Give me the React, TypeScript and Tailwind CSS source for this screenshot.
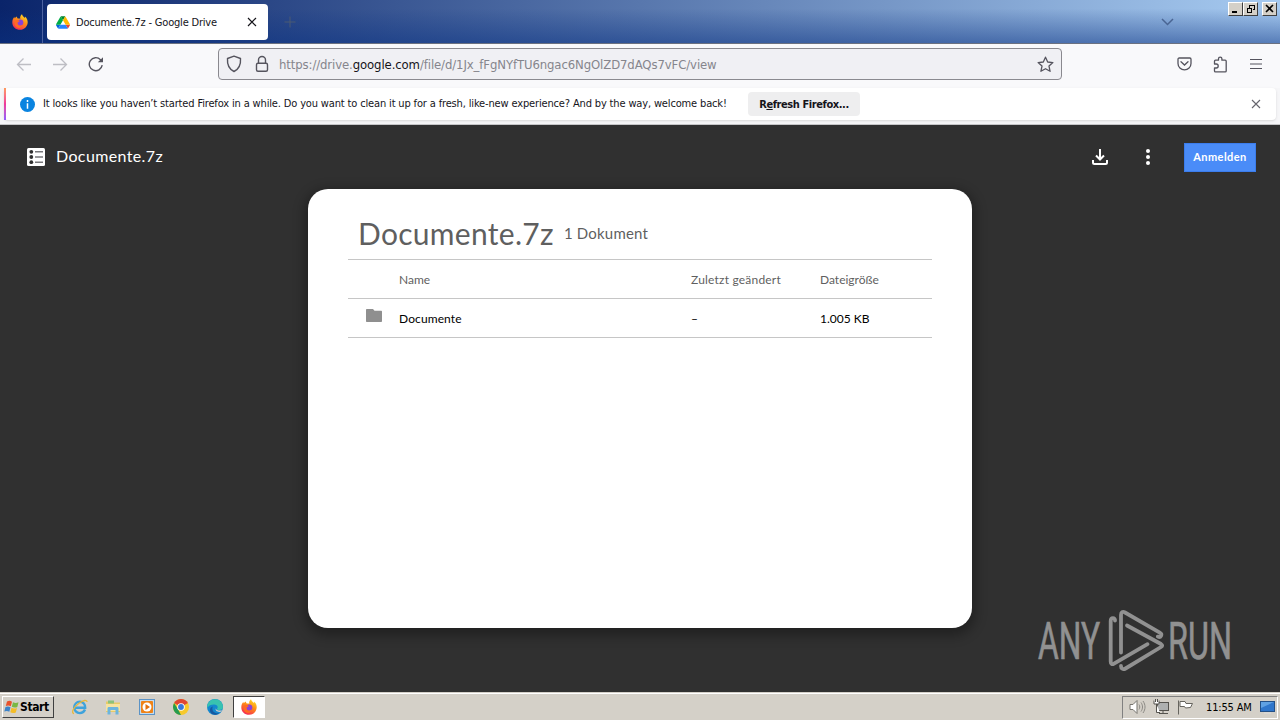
import React from "react";

const files = [{ id: 1, name: "Documente", modified: "–", size: "1.005 KB" }];

const FirefoxIcon = ({ size }: { size: number }) => (
  <svg width={size} height={size} viewBox="0 0 16 16">
    <defs>
      <linearGradient id="fox" x1="0.8" y1="0" x2="0.25" y2="1">
        <stop offset="0" stopColor="#ffe226" />
        <stop offset="0.45" stopColor="#ff8a16" />
        <stop offset="1" stopColor="#f5245b" />
      </linearGradient>
    </defs>
    <path
      d="M10 0.3c0.3 1.6 1.6 2.3 2.7 3.6 0.3-0.4 0.3-1 0.2-1.5C15 4 15.8 6.200 15.700 8.500 15.500 12.600 12.200 15.800 8 15.800S0.300 12.600 0.300 8.400c0-2.300 0.800-4.200 2.100-5.700 0 0.700 0.100 1.200 0.400 1.600C3.300 3.600 4 2.900 4.900 2.500c0 0.800 0.200 1.500 0.800 2 1-0.200 1.900 0 2.600 0.300C7.800 3 8.600 1.200 10 0.300z"
      fill="url(#fox)"
    />
    <circle cx="8.300" cy="8.600" r="3" fill="#8a42d8" />
    <path d="M3 6.500c1.500-1 3.400-0.700 4.800 0.500-0.600 0.900-2 0.800-2.400 2 0 2.700 3.500 3.800 5.700 1.800-1 3-4.200 4-6.500 2.500C2.500 12 2 9 3 6.500z" fill="#ff6a24" />
  </svg>
);

const DriveIcon = () => (
  <svg width="14" height="13" viewBox="0 0 87.3 78">
    <path d="m6.600 66.850 3.850 6.650c.8 1.400 1.950 2.500 3.300 3.300l13.750-23.800h-27.500c0 1.550.4 3.100 1.200 4.500z" fill="#0066da" />
    <path d="m43.650 25-13.750-23.800c-1.350.8-2.500 1.900-3.300 3.300l-25.400 44a9.060 9.060 0 0 0 -1.200 4.500h27.500z" fill="#00ac47" />
    <path d="m73.550 76.800c1.350-.8 2.500-1.900 3.300-3.300l1.600-2.750 7.650-13.250c.8-1.400 1.200-2.950 1.200-4.500h-27.502l5.852 11.500z" fill="#ea4335" />
    <path d="m43.650 25 13.750-23.800c-1.350-.8-2.900-1.200-4.500-1.200h-18.500c-1.600 0-3.150.45-4.500 1.200z" fill="#00832d" />
    <path d="m59.800 53h-32.300l-13.750 23.800c1.350.8 2.900 1.200 4.500 1.200h50.800c1.600 0 3.150-.45 4.500-1.200z" fill="#2684fc" />
    <path d="m73.400 26.500-12.700-22c-.8-1.400-1.950-2.500-3.300-3.300l-13.750 23.800 16.150 28h27.450c0-1.550-.4-3.100-1.200-4.500z" fill="#ffba00" />
  </svg>
);

const WindowButton = ({ children }: { children: React.ReactNode }) => (
  <div className="flex h-[14px] w-[15px] items-center justify-center border border-t-white border-l-white border-r-[#404040] border-b-[#404040] bg-[#d4d0c8]">
    <svg width="11" height="10" viewBox="0 0 11 10" fill="none" stroke="#000" shapeRendering="crispEdges">
      {children}
    </svg>
  </div>
);

const TitleBar = () => (
  <div className="flex h-[44px] border-b border-[#6b7180] bg-[linear-gradient(to_bottom,transparent_20%,rgba(10,50,130,0.5)),linear-gradient(to_right,#0a246a,#a6caf0)]">
    <div className="flex w-[43px] items-center justify-center border-r border-[#4c62a0] pr-0.5">
      <FirefoxIcon size={16} />
    </div>
    <div className="mt-1 ml-1 flex h-9 w-[221px] items-center rounded bg-white pl-[9px]">
      <DriveIcon />
      <span className="mt-0.5 ml-1.5 w-[165px] text-[11px] tracking-[-0.2px] whitespace-nowrap text-[#15141a]">
        Documente.7z - Google Drive
      </span>
      <svg className="ml-1.5" width="10" height="10" viewBox="0 0 10 10" stroke="#15141a" strokeWidth="1.2">
        <path d="M1 1l8 8M9 1l-8 8" />
      </svg>
    </div>
    <svg className="mt-4 ml-4" width="12" height="12" viewBox="0 0 12 12" stroke="#4b5a73" strokeWidth="1">
      <path d="M6 0.500v11M0.500 6h11" />
    </svg>
    <svg className="mt-[18px] ml-auto" width="13" height="8" viewBox="0 0 13 8" fill="none" stroke="#4a6593" strokeWidth="1.500">
      <path d="M1 1l5.500 5.500L12 1" />
    </svg>
    <div className="mt-0.5 mr-[3px] ml-[54px] flex">
      <WindowButton>
        <path d="M2 8h5" strokeWidth="2" />
      </WindowButton>
      <WindowButton>
        <path d="M4.500 4V1.500h5v4H8M4 1.500h6M2.500 4.500h4v4h-4zM2 4.500h5" />
      </WindowButton>
      <div className="ml-1">
        <WindowButton>
          <path d="M2 1l7 7M9 1L2 8" strokeWidth="1.600" shapeRendering="auto" />
        </WindowButton>
      </div>
    </div>
  </div>
);

const Toolbar = () => (
  <div className="flex h-11 items-center bg-[#f9f9fb] pb-1">
    <svg className="ml-4" width="16" height="16" viewBox="0 0 16 16" fill="none" stroke="#bebec4" strokeWidth="1.300">
      <path d="M15 8.500H1.500M7.500 2.500l-6 6 6 6" />
    </svg>
    <svg className="ml-5" width="16" height="16" viewBox="0 0 16 16" fill="none" stroke="#bebec4" strokeWidth="1.300">
      <path d="M1 8.500h13.500M8.500 2.500l6 6-6 6" />
    </svg>
    <svg className="ml-5" width="16" height="16" viewBox="0 0 16 16" fill="none" stroke="#55545e" strokeWidth="1.400">
      <path d="M14.200 9.200a6.500 6.500 0 1 1-1.700-5.500l1.300 1.300" />
      <path d="M15 1.200v5H9.800z" fill="#55545e" stroke="none" />
    </svg>
    <div className="ml-[114px] flex h-8 w-[844px] items-center rounded border border-[#8a898f] bg-[#f0f0f4] px-[7px]">
      <svg width="16" height="18" viewBox="0 0 16 18" fill="none" stroke="#55545e" strokeWidth="1.400">
        <path d="M8 1.200L14.500 3.500c0.400 5.300-1.400 10.500-6.500 13-5.100-2.500-6.900-7.700-6.500-13z" strokeLinejoin="round" />
      </svg>
      <svg className="ml-3" width="16" height="18" viewBox="0 0 16 18" fill="none" stroke="#55545e" strokeWidth="1.400">
        <rect x="2.500" y="8.200" width="11" height="8" rx="1.500" />
        <path d="M4.500 8V5a3.500 3.500 0 0 1 7 0v3" />
      </svg>
      <span className="mt-0.5 ml-[9px] text-[13px] tracking-[-0.11px] whitespace-nowrap text-[#85858c]">
        https://drive.<span className="text-[#15141a]">google.com</span>/file/d/1Jx_fFgNYfTU6ngac6NgOlZD7dAQs7vFC/view
      </span>
      <svg className="ml-auto" width="17" height="17" viewBox="0 0 17 17" fill="none" stroke="#55545e" strokeWidth="1.300" strokeLinejoin="round">
        <path d="M8.500 1.200l2.200 4.800 5.200 0.600-3.900 3.500 1.100 5.200-4.600-2.600-4.600 2.600L5 10.100 1.100 6.600 6.300 6z" />
      </svg>
    </div>
    <svg className="ml-[115px]" width="15" height="14" viewBox="0 0 15 14" fill="none" stroke="#55545e" strokeWidth="1.300">
      <path d="M2.200 1h10.600c0.700 0 1.200 0.500 1.200 1.200V6.500a6.500 6.300 0 0 1-13 0V2.200C1 1.500 1.500 1 2.200 1z" />
      <path d="M4 4.800l3.500 3.200L11 4.800" strokeLinecap="round" />
    </svg>
    <svg className="ml-5" width="17" height="17" viewBox="0 0 17 17" fill="none" stroke="#55545e" strokeWidth="1.300" strokeLinejoin="round">
      <path d="M2.500 8V5.200c0-0.600 0.400-1 1-1H6.500V2.800a1.700 1.700 0 0 1 3.400 0v1.400h3.300c0.600 0 1 0.400 1 1v9.700c0 0.600-0.400 1-1 1H3.500c-0.600 0-1-0.400-1-1V12h1.700a1.900 1.900 0 0 0 0-4z" />
    </svg>
    <svg className="ml-[21px]" width="12" height="12" viewBox="0 0 12 12" stroke="#55545e" strokeWidth="1.200">
      <path d="M0 1.500h12M0 6h12M0 10.500h12" />
    </svg>
  </div>
);

const Notification = () => (
  <div className="h-[37px] border-b border-[#c6c6c8] bg-[#f6f6f8] px-1">
    <div className="flex h-8 items-center rounded bg-white shadow-sm">
      <div className="h-8 w-0.5 bg-linear-to-b from-[#ff9a5c] via-[#f0389a] to-[#9059ff]" />
      <svg className="ml-3.5" width="15" height="15" viewBox="0 0 15 15">
        <circle cx="7.500" cy="7.500" r="7.500" fill="#0a84e0" />
        <path d="M7.500 3v2M7.500 6.200v5.600" stroke="#fff" strokeWidth="1.500" />
      </svg>
      <span className="ml-2 w-[705px] text-[11px] tracking-[-0.15px] whitespace-nowrap text-[#15141a]">
        It looks like you haven’t started Firefox in a while. Do you want to clean it up for a fresh, like-new experience? And by the way, welcome back!
      </span>
      <button className="flex h-6 w-28 items-center justify-center rounded bg-[#eeeeef] pt-0.5 text-[11px] font-bold tracking-[-0.42px] whitespace-nowrap text-[#15141a]">
        <span>
          R<span className="underline">e</span>fresh Firefox...
        </span>
      </button>
      <svg className="mr-[15px] ml-auto" width="10" height="10" viewBox="0 0 10 10" stroke="#66656d" strokeWidth="1.100">
        <path d="M1 1l8 8M9 1L1 9" />
      </svg>
    </div>
  </div>
);

const Watermark = () => (
  <svg className="absolute top-[484px] left-[1035px]" width="244" height="72" viewBox="0 0 244 72" fill="none">
    <g fontFamily="Roboto" fontSize="52" fill="#919191" stroke="#919191" strokeWidth="0.700">
      <text x="3" y="50" textLength="62" lengthAdjust="spacingAndGlyphs">
        ANY
      </text>
      <text x="133" y="50" textLength="64" lengthAdjust="spacingAndGlyphs">
        RUN
      </text>
    </g>
    <g stroke="#919191" strokeWidth="3.800" strokeLinecap="round" strokeLinejoin="round">
      <path d="M80 11.500c0.300-3-4.300-3.500-4.300 0.500v40.500c0 2.500 1.300 3.300 3.300 2.100l33.500-19.400" />
      <path d="M86 43.500V6c0-2.800 1.700-3.800 4-2.500l34.800 20.200c3 1.800 1 5.200-2 3.900" />
      <path d="M92 16.500l34 18.500c1.600 1 1.600 2 0 3L90.500 59.500c-2.500 1.500-4.500 0-4.500-2.500" />
    </g>
  </svg>
);

const Viewer = () => (
  <div className="relative h-[567px] bg-[#303030] font-[Lato,sans-serif]">
    <div className="flex h-16 items-center pr-6 pl-[27px]">
      <svg width="18" height="18" viewBox="0 0 18 18">
        <rect width="18" height="18" rx="1.500" fill="#fff" />
        <g fill="#303030">
          <circle cx="4.300" cy="3.800" r="1.900" />
          <circle cx="4.300" cy="9" r="1.900" />
          <circle cx="4.300" cy="14.200" r="1.900" />
        </g>
        <path d="M8 3.800h8M8 9h8M8 14.200h8" stroke="#77777b" strokeWidth="1.400" />
      </svg>
      <span className="mb-0.5 ml-[11px] text-base tracking-[0.37px] text-white">Documente.7z</span>
      <svg className="ml-auto" width="16" height="16" viewBox="0 0 16 16" fill="none" stroke="#fff" strokeWidth="2">
        <path d="M8 0v10M4 6.500l4 4 4-4M1 11v2.500c0 1 0.500 1.500 1.500 1.500h11c1 0 1.500-0.500 1.500-1.500V11" />
      </svg>
      <svg className="ml-[38px]" width="4" height="16" viewBox="0 0 4 16" fill="#fff">
        <circle cx="2" cy="2" r="2" />
        <circle cx="2" cy="8" r="2" />
        <circle cx="2" cy="14" r="2" />
      </svg>
      <button className="ml-[34px] h-[29px] w-[72px] border border-[#3b7ded] bg-[#4a8cf8] text-[11px] font-bold tracking-[0.45px] text-white">
        Anmelden
      </button>
    </div>

    <div className="mx-auto h-[439px] w-[664px] rounded-[20px] bg-white px-10 pt-[19px] text-[#5f5f5f] shadow-[0_4px_12px_4px_rgba(0,0,0,0.3)]">
      <div className="flex h-[52px] items-center border-b border-[#c6c6c6] pl-2.5">
        <h1 className="text-[30px] tracking-[0.3px]">Documente.7z</h1>
        <span className="ml-2.5 text-[15px] tracking-[0.2px]">1 Dokument</span>
      </div>
      <div className="grid h-[39px] grid-cols-[51px_292px_129px_1fr] items-center border-b border-[#c6c6c6] pt-0.5 text-xs">
        <span />
        <span>Name</span>
        <span className="tracking-[0.2px]">Zuletzt geändert</span>
        <span>Dateigröße</span>
      </div>
      {files.map((file) => (
        <div
          key={file.id}
          className="grid h-[39px] grid-cols-[51px_292px_129px_1fr] items-center border-b border-[#c6c6c6] pt-0.5 text-xs text-black"
        >
          <svg className="mb-2 ml-[18px]" width="16" height="13" viewBox="0 0 16 13" fill="#8f8f8f">
            <path d="M1 0h6l1.500 1.700H15c0.600 0 1 0.400 1 1V12c0 0.600-0.400 1-1 1H1c-0.600 0-1-0.400-1-1V1c0-0.600 0.400-1 1-1z" />
          </svg>
          <span className="tracking-[0.1px]">{file.name}</span>
          <span>{file.modified}</span>
          <span>{file.size}</span>
        </div>
      ))}
    </div>
    <Watermark />
  </div>
);

const Taskbar = () => (
  <div className="border-t border-[#d4d0c8]">
    <div className="flex h-[27px] items-center border-t border-white bg-[#d4d0c8] pr-0.5 pl-0.5">
      <button className="flex h-[22px] w-[52px] items-center border border-t-white border-l-white border-r-[#404040] border-b-[#404040] pl-px text-xs font-bold tracking-[-0.4px] text-black">
        <svg width="16" height="16" viewBox="0 0 16 16">
          <path d="M3 2.500c2-1 3.500-0.800 5 0.200L6.800 7.300C5.300 6.300 3.500 6.200 1.800 7z" fill="#e8522c" />
          <path d="M9 3.200c1.800 1 3.500 1 5.500 0.100L13.300 8c-1.800 0.800-3.800 0.700-5.500-0.300z" fill="#79b843" />
          <path d="M1.500 8c1.700-0.800 3.500-0.700 5 0.300L5.300 12.800C3.800 11.800 2 11.800 0.300 12.500z" fill="#3c83c9" />
          <path d="M7.500 8.800c1.800 1 3.500 1 5.500 0.200l-1.200 4.500c-1.800 0.800-3.800 0.800-5.500-0.200z" fill="#f4bd27" />
        </svg>
        Start
      </button>
      {/* Quick launch */}
      <svg className="ml-[17px]" width="18" height="16" viewBox="0 0 18 16" fill="none">
        <path d="M14 10.500c-1 2.300-3 3.600-5.200 3.600-3.200 0-5.600-2.500-5.600-5.600s2.300-5.700 5.600-5.700c3.400 0 5.500 2.500 5.400 6H4" stroke="#3fa3dc" strokeWidth="2.400" />
        <path d="M3 14.500c-3-0.500-1-6 5-10.300 4.500-3.200 8-3.600 8-1.200" stroke="#e9b83a" strokeWidth="1.300" />
      </svg>
      <svg className="ml-4" width="16" height="16" viewBox="0 0 16 16">
        <path d="M1 2.500h6l1 1h7V13H1z" fill="#e8ca67" />
        <path d="M3 1.500h6v3H3z" fill="#8ac27b" />
        <path d="M1 5h14v7H1z" fill="#f6e3a0" />
        <path d="M2.500 15.500V9.500c0-1 0.500-1.500 1.500-1.500h8c1 0 1.500 0.500 1.500 1.500v6h-3V11h-5v4.500z" fill="#6db5dd" />
      </svg>
      <svg className="ml-[18px]" width="16" height="16" viewBox="0 0 16 16">
        <rect x="0.500" y="0.500" width="15" height="15" fill="#c4dcf0" stroke="#5b93c6" />
        <rect x="2" y="2" width="12" height="12" rx="1" fill="#ef8318" />
        <circle cx="8" cy="8" r="4.500" fill="#fff" />
        <path d="M6.500 5l4.500 3-4.500 3z" fill="#e2700d" />
      </svg>
      <svg className="ml-[18px]" width="16" height="16" viewBox="0 0 16 16">
        <circle cx="8" cy="8" r="8" fill="#f7c92c" />
        <path d="M8 8L1.100 4A8 8 0 0 1 14.900 4z" fill="#df4635" />
        <path d="M1.100 4l4 6.500L8 16A8 8 0 0 1 1.100 4z" fill="#259b50" />
        <circle cx="8" cy="8" r="3.800" fill="#fff" />
        <circle cx="8" cy="8" r="2.900" fill="#3778dc" />
      </svg>
      <svg className="ml-[18px]" width="16" height="16" viewBox="0 0 16 16">
        <circle cx="8" cy="8" r="8" fill="#1487ce" />
        <path d="M0.300 6A8 8 0 0 1 16 8c0 2-1.500 3-3.500 3-2.500 0-3-1-2-2 0.700-2-1-3.500-3.500-3.500C4 5.500 1.500 6.500 0.300 9z" fill="#38c2b0" />
        <path d="M5.800 7.500C4 12 8 15 12.500 14c-4 3.500-10 1.500-9.500-3.200 0.200-1.800 1.300-3 2.800-3.300z" fill="#1659a1" />
        <path d="M9 8.500c-1 2 1.500 3.500 6 2.800l-1 1.500C10.500 13.500 7.500 11.500 9 8.500z" fill="#d4d0c8" />
      </svg>
      <div className="ml-2.5 flex h-[22px] w-8 items-center justify-center border border-t-[#404040] border-l-[#404040] border-r-white border-b-white bg-white">
        <FirefoxIcon size={16} />
      </div>

      {/* Tray */}
      <div className="ml-auto flex h-[23px] w-[156px] items-center border border-t-[#808080] border-l-[#808080] border-r-white border-b-white pl-1.5">
        <svg width="17" height="16" viewBox="0 0 17 16" fill="none" stroke="#77756f">
          <path d="M1 5.500h3l4-4v13l-4-4H1z" fill="#fff" />
          <path d="M10 5.500c1 1.500 1 3.500 0 5M12 3.500c2 3 2 6 0 9M14 2c2.700 4 2.700 8 0 12" stroke="#8c8a85" />
        </svg>
        <svg className="ml-[7px]" width="17" height="16" viewBox="0 0 17 16" stroke="#55534e">
          <rect x="4.500" y="3.500" width="11" height="8" fill="#aeb0b0" />
          <path d="M6 14.500h9M10 12v2" />
          <path d="M1 1.500v3.500h5V1.500M2.500 0v3M4.500 0v3M3.500 5v8.500H7" fill="#fff" />
        </svg>
        <svg className="ml-[7px]" width="17" height="16" viewBox="0 0 17 16" fill="#fff" stroke="#66645e">
          <path d="M1.500 1.500v14M3 2.500h5l1 2h6.500l-2 4-5 0.500-1-1.500H3z" />
        </svg>
        <span className="mt-0.5 ml-3 w-[47px] text-[11px] tracking-[-0.15px] whitespace-nowrap text-black">11:55 AM</span>
        <svg className="ml-[7px]" width="15" height="14" viewBox="0 0 15 14">
          <rect x="0.500" y="1.500" width="14" height="10" fill="#2f76cb" stroke="#235087" />
          <path d="M1 2h13L1 8z" fill="#5fa1e3" />
          <path d="M4 13h7" stroke="#ddd" />
        </svg>
      </div>
    </div>
  </div>
);

const App: React.FC = () => {
  return (
    <div className="h-[720px] w-[1280px] overflow-hidden bg-[#d4d0c8] font-['DejaVu_Sans_Condensed','DejaVu_Sans',sans-serif]">
      <TitleBar />
      <Toolbar />
      <Notification />
      <Viewer />
      <Taskbar />
    </div>
  );
};

export default App;
